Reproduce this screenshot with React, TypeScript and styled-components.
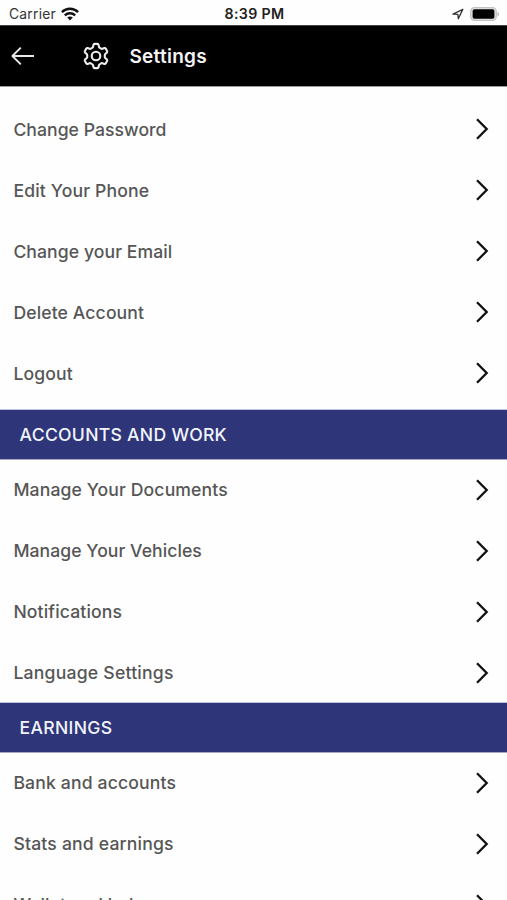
import React from "react";
import styled, { createGlobalStyle } from "styled-components";

const GlobalStyle = createGlobalStyle`
  * { box-sizing: border-box; }
  html, body { margin: 0; height: 900px; overflow: hidden; background: #fefefe; }
`;
const Screen = styled.div`
  height: 900px;
  overflow: hidden;
  display: flex;
  flex-direction: column;
  background: #fefefe;
  font-family: Inter, "Liberation Sans", sans-serif;
  color: #565656;
`;
const StatusBar = styled.div`
  flex: none;
  height: 25px;
  padding: 2px 7px 0 9px;
  display: grid;
  grid-template-columns: 1fr auto 1fr;
  align-items: center;
  font-size: 13.8px;
  line-height: 23px;
  color: #333;
`;
const Carrier = styled.div`
  display: flex;
  align-items: center;
  gap: 5px;
  letter-spacing: 0.25px;
`;
const CarrierName = styled.span`
  padding-top: 1px;
  line-height: 22px;
`;
const Clock = styled.div`
  font-weight: 600;
  font-size: 14.2px;
  letter-spacing: 0.35px;
  color: #222;
`;
const Indicators = styled.div`
  display: flex;
  align-items: center;
  justify-content: flex-end;
  gap: 6px;
`;
const Header = styled.header`
  flex: none;
  height: 62px;
  padding-left: 11px;
  display: flex;
  align-items: center;
  background: #000;
  border-top: 1px solid #444;
  border-bottom: 1px solid #999;
`;
const Title = styled.h1`
  margin: 0 0 0 20.5px;
  padding-top: 2px;
  font-size: 19px;
  line-height: 24px;
  font-weight: 600;
  letter-spacing: 0.25px;
  color: #f4f4f4;
`;
const Gear = styled.svg`
  margin-left: 48px;
`;
const Content = styled.main`
  padding-top: 12px;
  display: flex;
  flex-direction: column;
`;
const Rows = styled.div<{ $end?: number }>`
  margin-bottom: ${(p) => p.$end ?? 0}px;
`;
const Row = styled.div`
  height: 61.1px;
  padding: 0 18px 0 13.4px;
  display: flex;
  align-items: center;
  justify-content: space-between;
`;
const Label = styled.span<{ $tracking: number }>`
  font-size: 17.6px;
  line-height: 22px;
  font-weight: 500;
  white-space: nowrap;
  letter-spacing: ${(p) => p.$tracking}px;
`;
const SectionTitle = styled.h2<{ $tracking: number }>`
  margin: 0 0 -0.5px;
  height: 51px;
  padding-left: 19.6px;
  display: flex;
  align-items: center;
  background: #2e3579;
  border-top: 1px solid #c0c2da;
  border-bottom: 1px solid #a5a8c9;
  color: #f2f4fc;
  font-size: 17.6px;
  line-height: 23px;
  font-weight: 500;
  letter-spacing: ${(p) => p.$tracking}px;
`;
const ChevronIcon = styled.svg`
  margin-bottom: 1px;
`;

type Item = [string, number];
const account: Item[] = [
  ["Change Password", 0.05],
  ["Edit Your Phone", 0.16],
  ["Change your Email", 0.08],
  ["Delete Account", 0.12],
  ["Logout", 0.12],
];
const work: Item[] = [
  ["Manage Your Documents", 0.12],
  ["Manage Your Vehicles", 0.06],
  ["Notifications", 0.14],
  ["Language Settings", 0.22],
];
const earnings: Item[] = [
  ["Bank and accounts", 0.15],
  ["Stats and earnings", 0.18],
  ["Wallet and balance", 0.15],
];

const Chevron = () => (
  <ChevronIcon width="14" height="22" viewBox="0 0 14 22" fill="none" stroke="#111" strokeWidth="2.3">
    <path d="M2 1.2 11.7 11 2 20.8" />
  </ChevronIcon>
);

const Items = ({ items, end }: { items: Item[]; end?: number }) => (
  <Rows $end={end}>
    {items.map(([text, tracking]) => (
      <Row key={text}>
        <Label $tracking={tracking}>{text}</Label>
        <Chevron />
      </Row>
    ))}
  </Rows>
);

export default function App() {
  return (
    <Screen>
      <GlobalStyle />
      <StatusBar>
        <Carrier>
          <CarrierName>Carrier</CarrierName>
          <svg width="18" height="14" viewBox="0 0 18 14" fill="none" stroke="#111" strokeWidth="2.4">
            <path d="M.9 5.1C5.5.7 12.5.7 17.1 5.1M3.8 8.3c3-2.8 7.4-2.8 10.4 0" />
            <path d="M9 13.5 6.2 10.6c1.6-1.5 4-1.5 5.6 0z" fill="#111" stroke="none" />
          </svg>
        </Carrier>
        <Clock>8:39 PM</Clock>
        <Indicators>
          <svg width="12" height="12" viewBox="0 0 12 12" fill="none" stroke="#333" strokeWidth="1.3" strokeLinejoin="round">
            <path d="M1 6.2 10.8 1.4 6.3 10.8 5.9 6.3z" />
          </svg>
          <svg width="30" height="14" viewBox="0 0 30 14">
            <rect x=".7" y=".7" width="25.6" height="12.6" rx="3.7" fill="#e4e4e4" stroke="#c2c2c2" strokeWidth="1.2" />
            <rect x="2.6" y="2.2" width="21.8" height="9.6" rx="1.8" fill="#000" />
            <path d="M27.5 4.7c2 .8 2 3.8 0 4.6z" fill="#b8b8b8" />
          </svg>
        </Indicators>
      </StatusBar>
      <Header>
        <svg width="24" height="20" viewBox="0 0 24 20" fill="none" stroke="#e8e8e8" strokeWidth="1.9" strokeLinejoin="round">
          <path d="M9.8 1.6 1.4 10l8.4 8.4M1.4 10H23" />
        </svg>
        <Gear width="26" height="28" viewBox="0 0 26 28" fill="none" stroke="#eee" strokeWidth="2.1" strokeLinejoin="round">
          <path d="M11.5 1.9h3q.8 0 1 .8l.5 2.2q.2.7.9 1l1.2.7q.6.4 1.3.2l2-.7q.9-.3 1.3.5l1.4 2.4q.4.8-.2 1.4l-1.6 1.5q-.5.5-.5 1.2v1.8q0 .7.5 1.2l1.6 1.5q.6.6.2 1.4l-1.4 2.4q-.4.8-1.3.5l-2-.7q-.7-.2-1.3.2l-1.2.7q-.7.3-.9 1l-.5 2.2q-.2.8-1 .8h-3q-.8 0-1-.8L10 23.1q-.2-.7-.9-1l-1.2-.7q-.6-.4-1.3-.2l-2 .7q-.9.3-1.3-.5L1.9 19q-.4-.8.2-1.4l1.6-1.5q.5-.5.5-1.2v-1.8q0-.7-.5-1.2l-1.6-1.5q-.6-.6-.2-1.4l1.4-2.4q.4-.8 1.3-.5l2 .7q.7.2 1.3-.2l1.2-.7q.7-.3.9-1l.5-2.2q.2-.8 1-.8z" />
          <circle cx="13" cy="14" r="4.3" />
        </Gear>
        <Title>Settings</Title>
      </Header>
      <Content>
        <Items items={account} end={4.5} />
        <SectionTitle $tracking={0.28}>ACCOUNTS AND WORK</SectionTitle>
        <Items items={work} end={-1.9} />
        <SectionTitle $tracking={0.3}>EARNINGS</SectionTitle>
        <Items items={earnings} />
      </Content>
    </Screen>
  );
}
